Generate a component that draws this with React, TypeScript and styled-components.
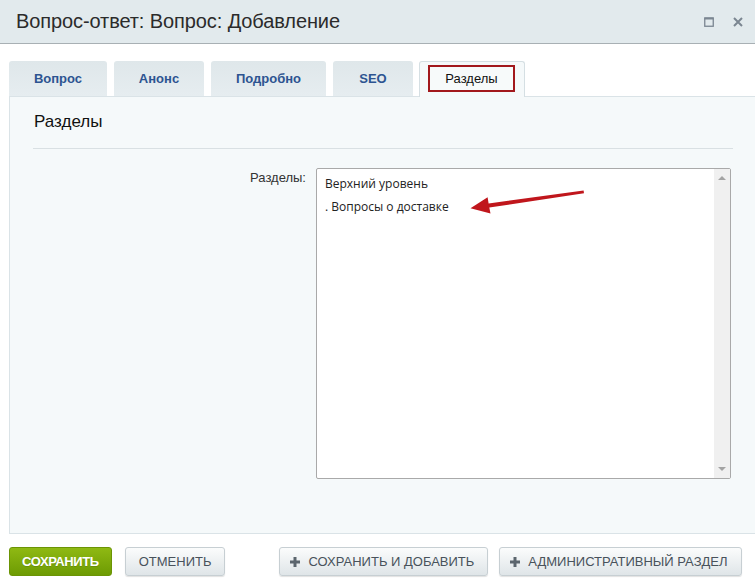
import styled, { createGlobalStyle } from 'styled-components';

const GlobalStyle = createGlobalStyle`
  html, body {
    margin: 0;
    padding: 0;
    background: #fff;
    font-family: "Liberation Sans", Arial, sans-serif;
  }
`;

// Окно целиком
const Dialog = styled.div`
  width: 755px;
  height: 581px;
  display: flex;
  flex-direction: column;
  overflow: hidden;
  background: #fff;
`;

// Шапка с заголовком
const Header = styled.div`
  height: 43px;
  flex: none;
  display: flex;
  align-items: center;
  justify-content: space-between;
  padding: 0 12px 0 16px;
  background: #e2eaed;
  border-bottom: 1px solid #a8b0b4;
`;

const Title = styled.h1`
  margin: 0;
  font-size: 20px;
  font-weight: normal;
  color: #2b2b2b;
  letter-spacing: -0.1px;
`;

const HeaderIcons = styled.div`
  display: flex;
  align-items: center;
  gap: 19px;
  padding-top: 1px;
`;

const Body = styled.div`
  flex: 1;
  display: flex;
  flex-direction: column;
  padding: 17px 0 0 9px;
`;

// Вкладки
const Tabs = styled.div`
  display: flex;
  height: 35px;
`;

const Tab = styled.div<{ $w: number; $active?: boolean }>`
  width: ${(p) => p.$w}px;
  margin-right: ${(p) => (p.$active ? 0 : 7)}px;
  margin-left: ${(p) => (p.$active ? -1 : 0)}px;
  box-sizing: border-box;
  display: flex;
  align-items: center;
  justify-content: center;
  border-radius: 3px 3px 0 0;
  font-size: 13px;
  cursor: pointer;
  ${(p) =>
    p.$active
      ? `
    background: #f5f9fa;
    border: 1px solid #d5dfe3;
    border-bottom: none;
    padding: 3px 9px 0 8px;
    height: 36px;
    position: relative;
    z-index: 1;
  `
      : `
    background: linear-gradient(#dfe7ea, #e6edf0);
    color: #2d5491;
    font-weight: bold;
  `}
`;

const ActiveLabel = styled.span`
  flex: 1;
  align-self: flex-start;
  height: 27px;
  box-sizing: border-box;
  display: flex;
  align-items: center;
  justify-content: center;
  border: 2px solid #a2181c;
  background: #f7fafa;
  color: #111;
`;

// Панель содержимого вкладки
const Panel = styled.div`
  height: 438px;
  box-sizing: border-box;
  background: #f5f9fa;
  border: 1px solid #dae3e7;
  border-right: none;
  padding: 0 22px 0 23px;
`;

const SectionTitle = styled.div`
  font-size: 17px;
  color: #111;
  padding: 15px 0 16px 1px;
  border-bottom: 1px solid #d9e0e3;
`;

const FormRow = styled.div`
  display: flex;
  margin-top: 19px;
`;

const FieldLabel = styled.div`
  width: 273px;
  text-align: right;
  font-size: 13px;
  color: #333;
  padding-top: 2px;
`;

const ListBox = styled.div`
  position: relative;
  margin-left: 10px;
  width: 415px;
  height: 311px;
  box-sizing: border-box;
  display: flex;
  background: #fff;
  border: 1px solid #a9a9a9;
  border-radius: 2px;
`;

const Options = styled.div`
  flex: 1;
  padding: 4px 0 0 8px;
  font-family: "Open Sans", "DejaVu Sans", sans-serif;
  font-size: 12px;
  color: #222;
`;

const Option = styled.div`
  height: 23px;
  line-height: 22px;
`;

const ScrollBar = styled.div`
  width: 16px;
  display: flex;
  flex-direction: column;
  justify-content: space-between;
  align-items: center;
  background: #f0f0f0;
  padding: 7px 0;
  box-sizing: border-box;
`;

const ScrollArrow = styled.div<{ $down?: boolean }>`
  width: 0;
  height: 0;
  border-left: 4px solid transparent;
  border-right: 4px solid transparent;
  ${(p) =>
    p.$down
      ? 'border-top: 4px solid #a3a3a3;'
      : 'border-bottom: 4px solid #a3a3a3;'}
`;

// Стрелка-указатель поверх списка
const Pointer = styled.svg`
  position: absolute;
  left: 0;
  top: 0;
  pointer-events: none;
`;

// Кнопки внизу
const Footer = styled.div`
  display: flex;
  align-items: center;
  margin-top: 13px;
`;

const Button = styled.button<{ $primary?: boolean; $gap?: number; $icon?: boolean }>`
  height: 29px;
  margin-right: ${(p) => p.$gap ?? 0}px;
  padding: 0 13px 0 ${(p) => (p.$icon ? 10 : 13)}px;
  display: flex;
  align-items: center;
  gap: 8px;
  border-radius: 3px;
  font-family: "Liberation Sans", Arial, sans-serif;
  font-size: 13px;
  cursor: pointer;
  ${(p) =>
    p.$primary
      ? `
    padding: 0 12px;
    background: linear-gradient(#8fb913, #6d9b03);
    border: 1px solid #6b9404;
    color: #fff;
    font-weight: bold;
    letter-spacing: -0.4px;
    text-shadow: 0 1px 0 rgba(0, 0, 0, 0.15);
  `
      : `
    background: linear-gradient(#fbfcfc, #dfe5e8);
    border: 1px solid #c7cfd3;
    color: #48525b;
    box-shadow: 0 1px 1px rgba(0, 0, 0, 0.12);
  `}
`;

const Plus = () => (
  <svg width="10" height="10" viewBox="0 0 10 10">
    <path d="M3.5 0h3v3.5H10v3H6.5V10h-3V6.5H0v-3h3.5z" fill="#5c666e" />
  </svg>
);

export default function App() {
  return (
    <Dialog>
      <GlobalStyle />
      <Header>
        <Title>Вопрос-ответ: Вопрос: Добавление</Title>
        <HeaderIcons>
          <svg width="10" height="10" viewBox="0 0 10 10">
            <rect x="0.75" y="1" width="8.5" height="8.25" fill="none" stroke="#7b8691" strokeWidth="1.3" />
            <rect x="0.5" y="0.5" width="9" height="2" fill="#7b8691" />
          </svg>
          <svg width="10" height="10" viewBox="0 0 10 10">
            <path d="M1 1l8 8M9 1l-8 8" stroke="#7b8691" strokeWidth="2" />
          </svg>
        </HeaderIcons>
      </Header>
      <Body>
        <Tabs>
          <Tab $w={98}>Вопрос</Tab>
          <Tab $w={90}>Анонс</Tab>
          <Tab $w={115}>Подробно</Tab>
          <Tab $w={80}>SEO</Tab>
          <Tab $w={106} $active>
            <ActiveLabel>Разделы</ActiveLabel>
          </Tab>
        </Tabs>
        <Panel>
          <SectionTitle>Разделы</SectionTitle>
          <FormRow>
            <FieldLabel>Разделы:</FieldLabel>
            <ListBox>
              <Options>
                <Option>Верхний уровень</Option>
                <Option>. Вопросы о доставке</Option>
              </Options>
              <ScrollBar>
                <ScrollArrow />
                <ScrollArrow $down />
              </ScrollBar>
              <Pointer width="415" height="80" viewBox="0 0 415 80">
                <path
                  d="M266.6 21.6 L267 24.3 L172.3 38.6 L173.5 44.5 L153.5 39.2 L170.6 28.3 L171.6 34.4 Z"
                  fill="#c0161c"
                />
              </Pointer>
            </ListBox>
          </FormRow>
        </Panel>
        <Footer>
          <Button $primary $gap={13}>СОХРАНИТЬ</Button>
          <Button $gap={54}>ОТМЕНИТЬ</Button>
          <Button $icon $gap={11}>
            <Plus />
            СОХРАНИТЬ И ДОБАВИТЬ
          </Button>
          <Button $icon>
            <Plus />
            АДМИНИСТРАТИВНЫЙ РАЗДЕЛ
          </Button>
        </Footer>
      </Body>
    </Dialog>
  );
}
